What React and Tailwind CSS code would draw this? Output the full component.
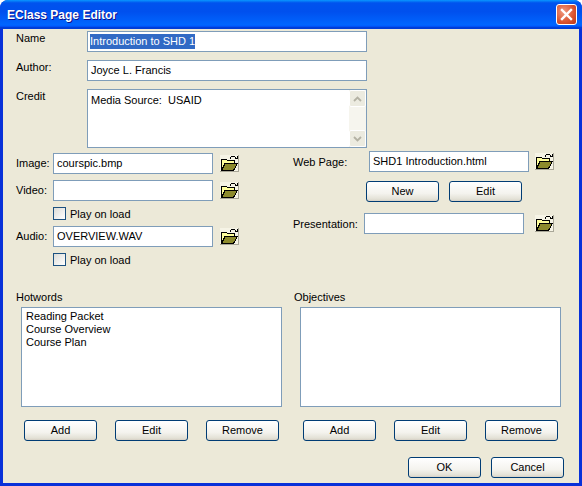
import { useState } from 'react';

const FONT = "font-['Liberation_Sans',Arial,sans-serif]";

// XP style push button
function XpButton({ children, className = '' }) {
  return (
    <button className={`h-[21px] w-[73px] shrink-0 rounded-[3px] border border-[#003c74] bg-[linear-gradient(180deg,#ffffff_0%,#f4f3ee_60%,#e3e1d6_90%,#d6d0c5_100%)] text-[11px] leading-none text-black ${className}`}>
      {children}
    </button>
  );
}

function TextBox({ value, width, className = '', selected = false, pad = 'pl-[3px]' }) {
  return (
    <div className={`flex h-[21px] shrink-0 items-center border border-[#7f9db9] bg-white text-[11px] text-black ${pad} ${className} ${width}`}>
      {selected ? <span className="bg-[#316ac5] leading-[15px] text-white">{value}</span> : <span>{value}</span>}
    </div>
  );
}

// open-folder toolbar glyph
function FolderButton({ className = '' }) {
  return (
    <div className={`flex h-[21px] w-[21px] shrink-0 items-center justify-center ${className}`}>
      <svg width="19" height="17" viewBox="0 0 19 17" shapeRendering="crispEdges">
        <rect x="0" y="0" width="19" height="17" fill="#f6f4e6" />
        <path d="M1.500 4.500h5l1 1h6.500v3H5l-3 6.500h-.5z" fill="#ffff9c" stroke="#000" strokeWidth="1" />
        <path d="M1.500 15.500 5 8.500h12.500l-4 7z" fill="#8c8a2c" stroke="#000" strokeWidth="1" />
        <path d="M10 3.500 11.500 1.500h3l2 2" fill="none" stroke="#000" strokeWidth="1" />
        <path d="M14.500 3.500h3M17.500 1v3" fill="none" stroke="#000" strokeWidth="1" />
        <path d="M18.500 0v16.500H0" fill="none" stroke="#a9a798" strokeWidth="1" />
      </svg>
    </div>
  );
}

function PlayOnLoad({ checked, onToggle }) {
  return (
    <label className="flex h-[13px] items-center pl-[37px] text-[11px] leading-none text-black">
      <input type="checkbox" checked={checked} onChange={onToggle} className="sr-only" />
      <span className="h-[13px] w-[13px] shrink-0 border border-[#1c5180] bg-[linear-gradient(135deg,#dcdcd7,#ffffff)]" />
      <span className="ml-[4px] pt-[1px]">Play on load</span>
    </label>
  );
}

function FileRow({ label, value }) {
  return (
    <div className="flex items-center">
      <span className="w-[37px] shrink-0 text-[11px] text-black">{label}</span>
      <TextBox value={value} width="w-[160px]" />
      <FolderButton className="ml-[6px]" />
    </div>
  );
}

function ListBox({ items, className = '' }) {
  return (
    <div className={`h-[100px] w-[261px] border border-[#7f9db9] bg-white pl-[4px] pt-[2px] text-[11px] leading-[13px] text-black ${className}`}>
      {items.map((item) => (
        <div key={item}>{item}</div>
      ))}
    </div>
  );
}

function ScrollArrow({ up }) {
  return (
    <div className="flex h-[17px] w-[17px] items-center justify-center rounded-[2px] border border-white bg-[#ecebe0]">
      <svg width="9" height="6" viewBox="0 0 9 6">
        <path d={up ? 'M1 5 4.500 1.500 8 5' : 'M1 1 4.500 4.500 8 1'} fill="none" stroke="#b4b2a4" strokeWidth="1.800" />
      </svg>
    </div>
  );
}

function App() {
  const [playVideo, setPlayVideo] = useState(false);
  const [playAudio, setPlayAudio] = useState(false);

  return (
    <div className={`flex h-[486px] w-[582px] flex-col overflow-hidden rounded-t-[8px] bg-[#0831d9] ${FONT}`}>
      {/* title bar */}
      <div className="flex h-[29px] shrink-0 items-center justify-between bg-[linear-gradient(180deg,#0997ff_0%,#0053ee_10%,#0050ee_40%,#0066ff_85%,#005bff_90%,#003dd7_95%,#003dd7_100%)] pl-[7px] pr-[5px]">
        <span className="text-[12px] font-bold text-white [text-shadow:1px_1px_#0f1089]">EClass Page Editor</span>
        <div className="flex h-[21px] w-[21px] items-center justify-center rounded-[3px] border border-white bg-[radial-gradient(circle_at_35%_35%,#f09a7f,#d9532f_60%,#b8371a)]">
          <svg width="13" height="13" viewBox="0 0 13 13">
            <path d="M2 2l9 9M11 2l-9 9" stroke="#fff" strokeWidth="2.400" strokeLinecap="square" />
          </svg>
        </div>
      </div>

      {/* client area */}
      <div className="mx-[3px] mb-[3px] flex min-h-0 flex-1 flex-col bg-[#ece9d8] pl-[13px] pr-[15px]">
        {/* name / author / credit */}
        <div className="mt-[2px] flex flex-col gap-[9px]">
          <div className="flex h-[20px] items-center">
            <span className="w-[71px] shrink-0 pb-[6px] text-[11px] text-black">Name</span>
            <TextBox value="Introduction to SHD 1" width="w-[280px]" className="h-[20px]" selected pad="pl-[2px]" />
          </div>
          <div className="flex h-[20px] items-center">
            <span className="w-[71px] shrink-0 pb-[6px] text-[11px] text-black">Author:</span>
            <TextBox value="Joyce L. Francis" width="w-[280px]" className="h-[20px]" />
          </div>
          <div className="flex items-start">
            <span className="-mt-[1px] w-[71px] shrink-0 text-[11px] text-black">Credit</span>
            <div className="flex h-[59px] w-[280px] justify-between border border-[#7f9db9] bg-white pl-[3px] pt-[2px] text-[11px] text-black">
              <span>Media Source:&nbsp; USAID</span>
              <div className="-mt-[2px] flex h-[57px] w-[17px] flex-col justify-between bg-[#f6f5ee]">
                <ScrollArrow up />
                <ScrollArrow />
              </div>
            </div>
          </div>
        </div>

        {/* media files */}
        <div className="flex items-start">
          <div className="mt-[5px] flex w-[277px] shrink-0 flex-col gap-[6px]">
            <FileRow label="Image:" value="courspic.bmp" />
            <FileRow label="Video:" value="" />
            <PlayOnLoad checked={playVideo} onToggle={() => setPlayVideo(!playVideo)} />
            <FileRow label="Audio:" value="OVERVIEW.WAV" />
            <PlayOnLoad checked={playAudio} onToggle={() => setPlayAudio(!playAudio)} />
          </div>
          <div className="mt-[3px] flex flex-col">
            <div className="flex items-center">
              <span className="w-[76px] shrink-0 pt-[1px] text-[11px] text-black">Web Page:</span>
              <TextBox value="SHD1 Introduction.html" width="w-[160px]" />
              <FolderButton className="ml-[5px]" />
            </div>
            <div className="ml-[73px] mt-[9px] flex gap-[10px]">
              <XpButton>New</XpButton>
              <XpButton>Edit</XpButton>
            </div>
            <div className="mt-[11px] flex items-center">
              <span className="w-[71px] shrink-0 pt-[1px] text-[11px] text-black">Presentation:</span>
              <TextBox value="" width="w-[160px]" />
              <FolderButton className="ml-[10px]" />
            </div>
          </div>
        </div>

        {/* hotwords / objectives */}
        <div className="mt-[24px] flex">
          <div className="w-[278px] shrink-0">
            <div className="h-[17px] text-[11px] leading-[14px] text-black">Hotwords</div>
            <ListBox items={['Reading Packet', 'Course Overview', 'Course Plan']} className="ml-[5px]" />
            <div className="ml-[8px] mt-[13px] flex gap-[18px]">
              <XpButton>Add</XpButton>
              <XpButton>Edit</XpButton>
              <XpButton>Remove</XpButton>
            </div>
          </div>
          <div>
            <div className="h-[17px] text-[11px] leading-[14px] text-black">Objectives</div>
            <ListBox items={[]} className="ml-[6px]" />
            <div className="ml-[9px] mt-[13px] flex gap-[18px]">
              <XpButton>Add</XpButton>
              <XpButton>Edit</XpButton>
              <XpButton>Remove</XpButton>
            </div>
          </div>
        </div>

        {/* dialog buttons */}
        <div className="mt-[16px] flex justify-end gap-[10px]">
          <XpButton>OK</XpButton>
          <XpButton>Cancel</XpButton>
        </div>
      </div>
    </div>
  );
}

export default App;
